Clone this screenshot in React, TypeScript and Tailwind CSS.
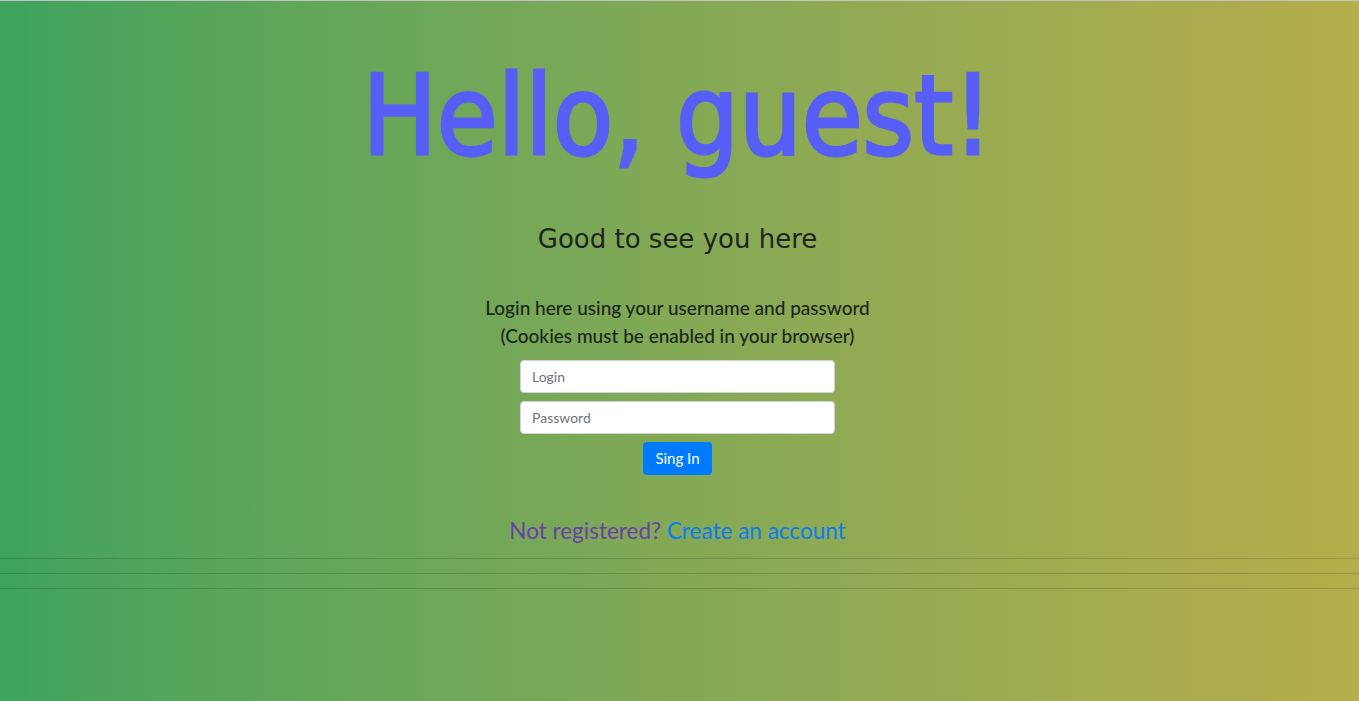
import React from "react";

export default function App() {
  return (
    <div className="min-h-[701px] w-full bg-gradient-to-r from-[#3da35d] to-[#b6ad4b] border-t border-[#c4c4c4] flex flex-col font-['Lato',sans-serif]">
      <div className="flex flex-col items-center pr-[4px]">
        <h1 className="mt-[40px] h-[150px] text-[110px] leading-[150px] text-[#575ef6] [-webkit-text-stroke:3px_#575ef6] font-['DejaVu_Sans_Condensed','DejaVu_Sans',sans-serif] font-stretch-condensed whitespace-nowrap">
          Hello, guest!
        </h1>
        <h2 className="mt-[32px] text-[26px] leading-[32px] text-[#1e2420] font-['DejaVu_Sans',sans-serif]">
          Good to see you here
        </h2>
        <p className="mt-[39px] text-[19px] leading-[28px] font-medium text-[#1c261c] text-center">
          Login here using your username and password
          <br />
          (Cookies must be enabled in your browser)
        </p>
        <form className="mt-[10px] flex flex-col items-center gap-2 w-[315px]" onSubmit={(e) => e.preventDefault()}>
          <input
            type="text"
            placeholder="Login"
            className="w-full h-[33px] rounded-[4px] border border-[#ced4da] bg-white px-[11px] text-[14px] text-[#495057] placeholder:text-[#6c757d] outline-none"
          />
          <input
            type="password"
            placeholder="Password"
            className="w-full h-[33px] rounded-[4px] border border-[#ced4da] bg-white px-[11px] text-[14px] text-[#495057] placeholder:text-[#6c757d] outline-none"
          />
          <button
            type="submit"
            className="h-[33px] px-[12px] rounded-[4px] bg-[#007bff] text-white text-[15px]"
          >
            Sing In
          </button>
        </form>
        <div className="mt-[42px] text-[22.5px] leading-[28px]">
          <span className="text-[#6a3fa8]">Not registered? </span>
          <a href="#" className="text-[#0a7cf2]">Create an account</a>
        </div>
      </div>
      <div className="mt-[13px] flex flex-col gap-[14px]">
        <div className="border-t border-black/15" />
        <div className="border-t border-black/15" />
        <div className="border-t border-black/15" />
      </div>
    </div>
  );
}
